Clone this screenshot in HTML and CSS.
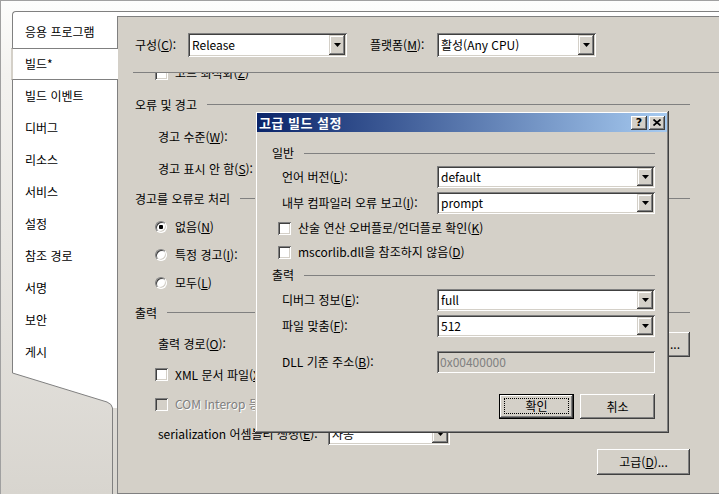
FILE: index.html
```html
<!DOCTYPE html>
<html lang="ko">

<head>
    <meta charset="UTF-8">
    <title>빌드 - 프로젝트 속성</title>
    <link rel="stylesheet" href="styles.css">
</head>

<body>
    <div class="window">
        <div class="side">
            <ul class="tabs">
                <li>응용 프로그램</li>
                <li class="on">빌드*</li>
                <li>빌드 이벤트</li>
                <li>디버그</li>
                <li>리소스</li>
                <li>서비스</li>
                <li>설정</li>
                <li>참조 경로</li>
                <li>서명</li>
                <li>보안</li>
                <li>게시</li>
            </ul>
            <svg class="tabs-end" width="105" height="126" viewBox="0 0 105 126">
                <path d="M0 0H105V40H100.5Q100 36 95 34L0.5 5Z" fill="#fff" />
                <path d="M0.5 0V5L95 34Q100 36 100.5 40V126" fill="none" stroke="#808080" />
            </svg>
        </div>

        <div class="page-wrap">
            <div class="page">
                <div class="config">
                    <span class="lbl-conf">구성(<u>C</u>):</span>
                    <div class="combo big">
                        <span class="val">Release</span>
                        <span class="drop"><svg width="7" height="4"><path d="M0 0h7l-3.5 4z" /></svg></span>
                    </div>
                    <span class="lbl-plat">플랫폼(<u>M</u>):</span>
                    <div class="combo big">
                        <span class="val">활성(Any CPU)</span>
                        <span class="drop"><svg width="7" height="4"><path d="M0 0h7l-3.5 4z" /></svg></span>
                    </div>
                </div>
                <div class="sep"></div>

                <div class="scroll">
                    <div class="rows">
                        <div class="row check"><span class="chk"></span><span>코드 최적화(<u>Z</u>)</span></div>
                        <div class="group">오류 및 경고</div>
                        <div class="row label">경고 수준(<u>W</u>):</div>
                        <div class="row label">경고 표시 안 함(<u>S</u>):</div>
                        <div class="group">경고를 오류로 처리</div>
                        <div class="row opt"><span class="radio on"></span><span>없음(<u>N</u>)</span></div>
                        <div class="row opt"><span class="radio"></span><span>특정 경고(<u>I</u>):</span></div>
                        <div class="row opt"><span class="radio"></span><span>모두(<u>L</u>)</span></div>
                        <div class="group">출력</div>
                        <div class="row label">
                            <span>출력 경로(<u>O</u>):</span>
                            <span class="btn browse">...</span>
                        </div>
                        <div class="row check"><span class="chk"></span><span>XML 문서 파일(<u>X</u>):</span></div>
                        <div class="row check off"><span class="chk"></span><span>COM Interop 등록(<u>C</u>)</span></div>
                        <div class="row label">
                            <span class="ser-label">serialization 어셈블리 생성(<u>E</u>):</span>
                            <div class="combo ser">
                                <span class="val">자동</span>
                                <span class="drop"><svg width="7" height="4"><path d="M0 0h7l-3.5 4z" /></svg></span>
                            </div>
                        </div>
                        <div class="row end"><span class="btn adv"><span>고급(<u>D</u>)...</span></span></div>
                    </div>
                </div>
            </div>
        </div>
    </div>

    <!-- 고급 빌드 설정 -->
    <div class="dialog">
        <div class="titlebar">
            <span class="title">고급 빌드 설정</span>
            <span class="tb-btn">?</span>
            <span class="tb-btn"><svg width="8" height="7"><path d="M0.5 0.5L7.5 6.5M7.5 0.5L0.5 6.5" stroke="#000" stroke-width="1.7" /></svg></span>
        </div>
        <div class="dlg-body">
            <div class="group">일반</div>
            <div class="field">
                <span class="flabel">언어 버전(<u>L</u>):</span>
                <div class="combo">
                    <span class="val">default</span>
                    <span class="drop"><svg width="7" height="4"><path d="M0 0h7l-3.5 4z" /></svg></span>
                </div>
            </div>
            <div class="field">
                <span class="flabel">내부 컴파일러 오류 보고(<u>I</u>):</span>
                <div class="combo">
                    <span class="val">prompt</span>
                    <span class="drop"><svg width="7" height="4"><path d="M0 0h7l-3.5 4z" /></svg></span>
                </div>
            </div>
            <div class="dcheck"><span class="chk"></span><span>산술 연산 오버플로/언더플로 확인(<u>K</u>)</span></div>
            <div class="dcheck"><span class="chk"></span><span>mscorlib.dll을 참조하지 않음(<u>D</u>)</span></div>
            <div class="group">출력</div>
            <div class="field">
                <span class="flabel">디버그 정보(<u>E</u>):</span>
                <div class="combo">
                    <span class="val">full</span>
                    <span class="drop"><svg width="7" height="4"><path d="M0 0h7l-3.5 4z" /></svg></span>
                </div>
            </div>
            <div class="field">
                <span class="flabel">파일 맞춤(<u>F</u>):</span>
                <div class="combo">
                    <span class="val">512</span>
                    <span class="drop"><svg width="7" height="4"><path d="M0 0h7l-3.5 4z" /></svg></span>
                </div>
            </div>
            <div class="field">
                <span class="flabel">DLL 기준 주소(<u>B</u>):</span>
                <div class="edit">0x00400000</div>
            </div>
            <div class="actions">
                <span class="btn def"><span class="focus">확인</span></span>
                <span class="btn">취소</span>
            </div>
        </div>
    </div>
</body>

</html>
```

FILE: styles.css
```css
* {
    margin: 0;
    padding: 0;
    box-sizing: border-box;
    list-style: none;
}

body {
    position: relative;
    width: 719px;
    height: 494px;
    overflow: hidden;
    font-family: "Noto Sans CJK KR", sans-serif;
    font-size: 12px;
    line-height: 16px;
    color: #000;
}

u {
    text-decoration: underline;
}

.window {
    display: flex;
    height: 494px;
    padding: 10px 0 0 11px;
    border-top: 1px solid #a0a0a0;
    border-left: 1px solid #a0a0a0;
    background: linear-gradient(#fdfdfc, #f3f2ef 15%, #d8d5cf);
}

/* 왼쪽 탭 */
.side {
    display: flex;
    flex-direction: column;
    width: 105px;
}

.tabs {
    padding-top: 4px;
    background: #fff;
    border-top: 1px solid #808080;
    border-left: 1px solid #808080;
    border-top-left-radius: 4px;
}

.tabs li {
    display: flex;
    align-items: center;
    height: 32px;
    padding-left: 12px;
    white-space: nowrap;
}

.tabs li.on {
    position: relative;
    margin: 0 -1px 0 -2px;
    background: #fff;
    border-top: 1px solid #808080;
    border-bottom: 1px solid #808080;
    border-left: 2px solid #d4d0c8;
}

.tabs-end {
    display: block;
}

/* 오른쪽 페이지 */
.page-wrap {
    flex: 1;
    display: flex;
    flex-direction: column;
    padding-top: 4px;
    background: #fff;
    border-top: 1px solid #808080;
}

.page {
    flex: 1;
    display: flex;
    flex-direction: column;
    min-height: 0;
    padding: 16px 0 0 17px;
    background: #d4d0c8;
    border: 1px solid #808080;
    border-right: 0;
}

.config {
    display: flex;
    align-items: center;
    height: 24px;
}

.lbl-conf {
    width: 53px;
}

.lbl-plat {
    width: 67px;
    margin-left: 23px;
}

.sep {
    margin: 15px 0 0 -2px;
    border-top: 1px solid #808080;
}

.scroll {
    flex: 1;
    min-height: 0;
    width: 555px;
    overflow: hidden;
}

.rows {
    display: grid;
    grid-template-rows: 32px 31px 33px 31px 29px 28px 28px 28px 31px 32px 29px 30px 30px 26px;
    margin-top: -16px;
}

.row {
    display: flex;
    align-items: center;
    white-space: nowrap;
}

.row.check {
    gap: 7px;
    padding-left: 20px;
}

.row.opt {
    gap: 8px;
    padding-left: 20px;
}

.row.label {
    padding-left: 23px;
}

.row.off {
    color: #808080;
    text-shadow: 1px 1px 0 #fff;
}

.row.off .chk {
    background: #d4d0c8;
}

.row.end {
    justify-content: flex-end;
}

.group {
    display: flex;
    align-items: center;
    gap: 10px;
    white-space: nowrap;
}

.group::after {
    content: '';
    flex: 1;
    border-top: 1px solid #808080;
}

.ser-label {
    width: 170px;
}

/* 컨트롤 */
.combo {
    display: flex;
    width: 218px;
    height: 22px;
    padding: 2px;
    background: #fff;
    box-shadow: inset 1px 1px #808080, inset -1px -1px #fff, inset 2px 2px #404040, inset -2px -2px #d4d0c8;
}

.combo.big {
    width: 159px;
    height: 24px;
}

.combo.ser {
    width: 122px;
}

.combo .val {
    flex: 1;
    display: flex;
    align-items: center;
    padding-left: 2px;
    overflow: hidden;
    white-space: nowrap;
}

.drop {
    display: flex;
    align-items: center;
    justify-content: center;
    width: 16px;
    background: #d4d0c8;
    box-shadow: inset -1px -1px #404040, inset 1px 1px #d4d0c8, inset -2px -2px #808080, inset 2px 2px #fff;
}

.drop svg {
    display: block;
    fill: #000;
}

.edit {
    display: flex;
    align-items: center;
    width: 218px;
    height: 22px;
    padding-left: 3px;
    color: #808080;
    background: #d4d0c8;
    box-shadow: inset 1px 1px #808080, inset -1px -1px #fff, inset 2px 2px #404040, inset -2px -2px #d4d0c8;
}

.chk {
    flex: none;
    width: 13px;
    height: 13px;
    background: #fff;
    box-shadow: inset 1px 1px #808080, inset -1px -1px #fff, inset 2px 2px #404040, inset -2px -2px #d4d0c8;
}

.radio {
    flex: none;
    display: flex;
    align-items: center;
    justify-content: center;
    width: 12px;
    height: 12px;
    background: #fff;
    border: 1px solid;
    border-color: #808080 #fff #fff #808080;
    border-radius: 50%;
    box-shadow: inset 1px 1px #404040, inset -1px -1px #d4d0c8;
}

.radio.on::after {
    content: '';
    width: 4px;
    height: 4px;
    border-radius: 1px;
    background: #000;
}

.btn {
    display: flex;
    align-items: center;
    justify-content: center;
    width: 75px;
    height: 25px;
    background: #d4d0c8;
    box-shadow: inset -1px -1px #404040, inset 1px 1px #fff, inset -2px -2px #808080, inset 2px 2px #d4d0c8;
    white-space: nowrap;
}

.btn.browse {
    width: 30px;
    margin-left: auto;
}

.btn.adv {
    width: 93px;
    height: 26px;
}

.btn.def {
    padding: 3px 4px 4px;
    border: 1px solid #000;
    box-shadow: inset -1px -1px #404040, inset 1px 1px #fff, inset -2px -2px #808080;
}

.btn .focus {
    flex: 1;
    align-self: stretch;
    display: flex;
    align-items: center;
    justify-content: center;
    border: 1px dotted #000;
}

/* 대화 상자 */
.dialog {
    position: absolute;
    left: 255px;
    top: 111px;
    width: 414px;
    height: 322px;
    padding: 2px;
    background: #d4d0c8;
    box-shadow: inset -1px -1px #404040, inset 1px 1px #d4d0c8, inset -2px -2px #808080, inset 2px 2px #fff;
}

.titlebar {
    display: flex;
    align-items: center;
    gap: 2px;
    height: 19px;
    padding: 0 2px;
    background: linear-gradient(90deg, #0a246a, #a6caf0);
}

.title {
    flex: 1;
    color: #fff;
    font-size: 13px;
    font-weight: 700;
    letter-spacing: 0.5px;
}

.tb-btn {
    display: flex;
    align-items: center;
    justify-content: center;
    width: 16px;
    height: 14px;
    font-family: "DejaVu Sans", sans-serif;
    font-size: 11px;
    font-weight: 700;
    background: #d4d0c8;
    box-shadow: inset -1px -1px #404040, inset 1px 1px #fff, inset -2px -2px #808080;
}

.tb-btn svg {
    display: block;
}

.dlg-body {
    display: grid;
    grid-template-rows: 20px 28px 24px 26px 22px 24px 26px 26px 46px 43px;
    align-items: center;
    padding: 11px 12px 0 15px;
}

.field {
    display: flex;
    align-items: center;
    padding-left: 10px;
}

.flabel {
    width: 155px;
    white-space: nowrap;
}

.dcheck {
    display: flex;
    align-items: center;
    gap: 7px;
    padding-left: 6px;
    white-space: nowrap;
}

.actions {
    display: flex;
    justify-content: flex-end;
    gap: 6px;
}
```
